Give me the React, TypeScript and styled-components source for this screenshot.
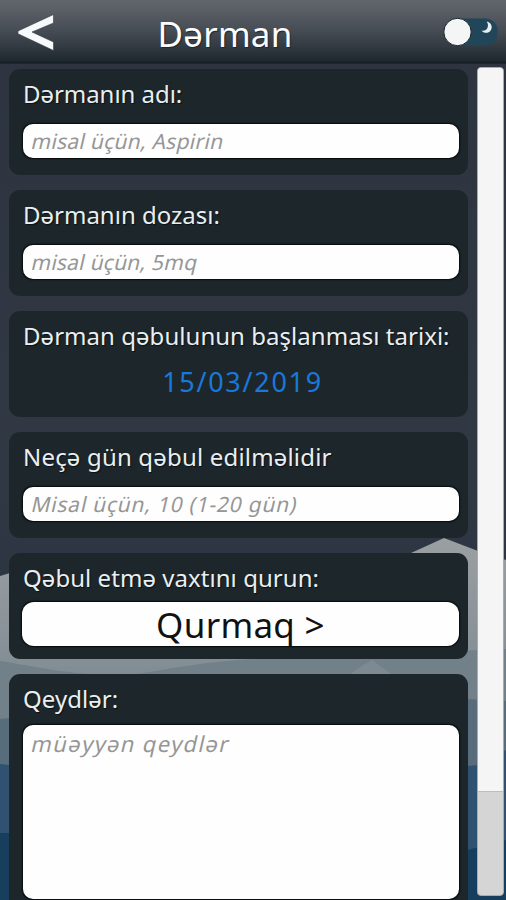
import React from "react";
import styled, { createGlobalStyle } from "styled-components";

const Global = createGlobalStyle`
  * { box-sizing: border-box; }
  body { margin: 0; background: #2e3641; font-family: "Noto Sans", sans-serif; }
`;

const Screen = styled.div`
  position: relative;
  width: 506px;
  height: 900px;
  overflow: hidden;
  display: flex;
  flex-direction: column;
`;

const Backdrop = styled.svg`
  position: absolute;
  inset: 0;
  z-index: -1;
`;

const Header = styled.header`
  flex: none;
  height: 64px;
  display: grid;
  grid-template-columns: 58px 1fr 114px;
  align-items: center;
  background: linear-gradient(#62666c 0, #5b5f66 9px, #474d55 30px, #303840 48px, #1e282f 61px, #121a22 63px, #27303a 64px);
`;

const BackButton = styled.button`
  display: flex;
  padding: 1px 0 0 18px;
  border: 0;
  background: none;
`;

const Title = styled.h1`
  margin: 0;
  padding: 3px 0 0 0;
  text-align: center;
  font-size: 35px;
  line-height: 48px;
  font-weight: 400;
  letter-spacing: 0.2px;
  color: #fbfcfd;
  text-shadow: 1px 1px 1px #20262c;
  white-space: nowrap;
`;

const ThemeSwitch = styled.div`
  justify-self: end;
  display: flex;
  padding-right: 6px;
`;

const Body = styled.div`
  flex: 1;
  min-height: 0;
  display: flex;
  justify-content: space-between;
  padding: 3px 2px 4px 9px;
`;

const Form = styled.main`
  width: 458.5px;
  padding-top: 2px;
  display: flex;
  flex-direction: column;
  gap: 15px;
`;

const Card = styled.section<{ $tall?: boolean }>`
  flex: none;
  height: ${(p) => (p.$tall ? 240 : 106.1)}px;
  padding: 8px 8.5px 0 14px;
  border-radius: 11px;
  background: #1d272b;
`;

const Label = styled.div<{ $spacing: number }>`
  height: 34px;
  line-height: 33px;
  font-size: 24px;
  letter-spacing: ${(p) => p.$spacing}px;
  color: #e9eff1;
  text-shadow: 1px 1px 1px #0a1114;
  white-space: nowrap;
`;

const Field = styled.div<{ $tall?: boolean }>`
  width: 436px;
  height: ${(p) => (p.$tall ? 173.5 : 34)}px;
  margin-top: ${(p) => (p.$tall ? 9 : 13)}px;
  padding: ${(p) => (p.$tall ? "1px" : "0")} 0 0 7px;
  border-radius: 10px;
  background: #fefefe;
  box-shadow: 0 0 1.5px 0.5px #05090b;
`;

const Hint = styled.span<{ $size?: number; $spacing: number }>`
  display: inline-block;
  transform: skewX(-13deg);
  transform-origin: 0 75%;
  line-height: 35px;
  font-size: ${(p) => p.$size ?? 21}px;
  letter-spacing: ${(p) => p.$spacing}px;
  color: #969696;
  white-space: nowrap;
`;

const DateValue = styled.div`
  margin-top: 9px;
  padding-left: 3px;
  text-align: center;
  font-size: 27px;
  line-height: 40px;
  letter-spacing: 1.7px;
  color: #1a78d8;
`;

const SetButton = styled.button`
  display: block;
  width: 437px;
  height: 44px;
  margin: 7px 0 0 -1px;
  padding: 2px 0 0;
  border: 0;
  border-radius: 12px;
  background: #fefefe;
  box-shadow: 0 0 1.5px 0.5px #05090b;
  font-family: inherit;
  font-size: 35px;
  line-height: 42px;
  letter-spacing: 0.3px;
  color: #111;
`;

const ScrollTrack = styled.div`
  width: 27px;
  height: 829px;
  border: 1px solid #a9abad;
  border-radius: 4px;
  background: #d5d5d5;
  overflow: hidden;
`;

const ScrollThumb = styled.div`
  height: 724px;
  border-bottom: 1px solid #bdbdbd;
  background: #f5f5f5;
`;

function Landscape() {
  return (
    <Backdrop width="506" height="900" viewBox="0 0 506 900">
      <defs>
        <linearGradient id="sky" x2="0" y2="1">
          <stop offset="0" stopColor="#2d3440" />
          <stop offset=".5" stopColor="#303843" />
          <stop offset=".65" stopColor="#2c3642" />
        </linearGradient>
        <linearGradient id="mist" x2="0" y2="1">
          <stop offset="0" stopColor="#9b9fa2" />
          <stop offset=".35" stopColor="#838e95" />
          <stop offset=".6" stopColor="#697c88" />
          <stop offset="1" stopColor="#596f80" />
        </linearGradient>
      </defs>
      <rect width="506" height="900" fill="url(#sky)" />
      <path d="M0 576L10 573L120 630L330 600L411 553L444 538L478 551L506 560V900H0Z" fill="url(#mist)" />
      <path d="M0 661C40 667 70 676 130 675C170 669 210 661 253 659L506 649V900H0Z" fill="#718089" />
      <path d="M338 683L360 667L372 660L402 682Z" fill="#7d8a91" />
      <path d="M0 719L30 716L350 730L467 699L506 701V900H0Z" fill="#586d7b" />
      <path d="M0 764L10 765L40 776L440 776L467 766L479 765L506 750V900H0Z" fill="#305270" />
      <path d="M0 833L30 833L440 860L467 850L479 847L506 840V900H0Z" fill="#173e5c" />
    </Backdrop>
  );
}

export default function App() {
  return (
    <>
      <Global />
      <Screen>
        <Landscape />
        <Header>
          <BackButton aria-label="Geri">
            <svg width="38" height="38" viewBox="0 0 38 38">
              <path d="M35.5 0.5V9L14 18L35.5 28V36.5L0 19.8V17Z" fill="#f7fafc" stroke="#343a40" strokeWidth=".6" />
            </svg>
          </BackButton>
          <Title>Dərman</Title>
          <ThemeSwitch>
            <svg width="58" height="30" viewBox="0 0 58 30">
              <rect x="2" y="1.5" width="53.5" height="27" rx="12" fill="#214659" />
              <path d="M44.6 4.4C49.2 5.2 51 9.8 48.8 13.2C46.6 16.6 41.8 16.6 39.4 13.4C42 14.2 44.4 13.2 45.4 11C46.4 8.7 46.1 6.2 44.6 4.4Z" fill="#e9f0f3" />
              <circle cx="15.5" cy="15" r="13.7" fill="#f4f5f5" stroke="#182229" strokeWidth="1" />
            </svg>
          </ThemeSwitch>
        </Header>
        <Body>
          <Form>
            <Card>
              <Label $spacing={-0.05}>Dərmanın adı:</Label>
              <Field><Hint $spacing={0.27}>misal üçün, Aspirin</Hint></Field>
            </Card>
            <Card>
              <Label $spacing={0}>Dərmanın dozası:</Label>
              <Field><Hint $spacing={0.22}>misal üçün, 5mq</Hint></Field>
            </Card>
            <Card>
              <Label $spacing={0.04}>Dərman qəbulunun başlanması tarixi:</Label>
              <DateValue>15/03/2019</DateValue>
            </Card>
            <Card>
              <Label $spacing={0.18}>Neçə gün qəbul edilməlidir</Label>
              <Field><Hint $spacing={0.76}>Misal üçün, 10 (1-20 gün)</Hint></Field>
            </Card>
            <Card>
              <Label $spacing={0.05}>Qəbul etmə vaxtını qurun:</Label>
              <SetButton>Qurmaq &gt;</SetButton>
            </Card>
            <Card $tall>
              <Label $spacing={0.05}>Qeydlər:</Label>
              <Field $tall><Hint $size={22} $spacing={1.35}>müəyyən qeydlər</Hint></Field>
            </Card>
          </Form>
          <ScrollTrack><ScrollThumb /></ScrollTrack>
        </Body>
      </Screen>
    </>
  );
}
